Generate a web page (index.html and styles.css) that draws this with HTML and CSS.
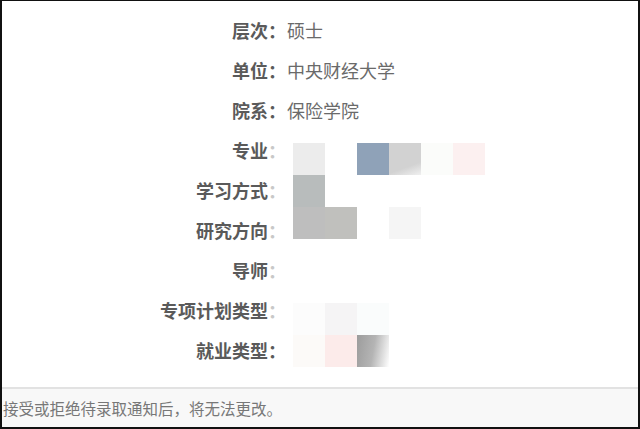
FILE: index.html
```html
<!DOCTYPE html>
<html lang="zh">
<head>
<meta charset="utf-8">
<link rel="stylesheet" href="styles.css">
</head>
<body>
<div class="frame">
  <div class="info">
    <div class="row"><span class="label">层次：</span><span class="value">硕士</span></div>
    <div class="row"><span class="label">单位：</span><span class="value">中央财经大学</span></div>
    <div class="row"><span class="label">院系：</span><span class="value">保险学院</span></div>
    <div class="row"><span class="label">专业<i class="faint">：</i></span><span class="value"></span></div>
    <div class="row"><span class="label">学习方式<i class="faint">：</i></span><span class="value"></span></div>
    <div class="row"><span class="label">研究方向<i class="faint">：</i></span><span class="value"></span></div>
    <div class="row"><span class="label">导师<i class="faint">：</i></span><span class="value"></span></div>
    <div class="row"><span class="label">专项计划类型<i class="faint">：</i></span><span class="value"></span></div>
    <div class="row"><span class="label">就业类型：</span><span class="value"></span></div>
  </div>
  <div class="mosaic">
    <b class="c1"></b><b></b><b class="c2"></b><b class="c3"></b><b class="c4"></b><b class="c5"></b>
    <b class="c6"></b><b></b><b></b><b></b><b></b><b></b>
    <b class="c7"></b><b class="c8"></b><b></b><b class="c9"></b><b></b><b></b>
    <b></b><b></b><b></b><b></b><b></b><b></b>
    <b></b><b></b><b></b><b></b><b></b><b></b>
    <b class="c10"></b><b class="c11"></b><b class="c12"></b><b></b><b></b><b></b>
    <b class="c13"></b><b class="c14"></b><b class="c15"></b><b></b><b></b><b></b>
  </div>
  <div class="footer">接受或拒绝待录取通知后，将无法更改。</div>
</div>
</body>
</html>
```
FILE: styles.css
```css
* { box-sizing: border-box; }
html, body { margin: 0; padding: 0; background: #fff; }
body { font-family: "Noto Sans CJK SC", "Noto Sans", sans-serif; }
.frame {
  position: relative;
  width: 640px;
  height: 429px;
  border-top: 1px solid #111;
  border-left: 2px solid #111;
  border-right: 2px solid #111;
  border-bottom: 2px solid #111;
  display: flex;
  flex-direction: column;
  background: #fff;
}
.info {
  flex: 1;
  padding-top: 9px;
}
.row {
  display: grid;
  grid-template-columns: 284px 1fr;
  column-gap: 1px;
  height: 40px;
  align-items: center;
  font-size: 18px;
  line-height: 24px;
}
.label {
  text-align: right;
  font-weight: bold;
  color: #5a5a5a;
}
.faint { font-style: normal; color: #c8c8c8; }
.value { color: #6a6a6a; }
.mosaic {
  position: absolute;
  left: 291px;
  top: 142px;
  display: grid;
  grid-template-columns: repeat(6, 32px);
  grid-auto-rows: 32px;
}
.mosaic b { display: block; background: transparent; }
.mosaic .c1 { background: #ececec; }
.mosaic .c2 { background: #8fa2b8; }
.mosaic .c3 { background: linear-gradient(160deg, #d2d2d2 70%, #f0f0f0 100%); }
.mosaic .c4 { background: #fbfcfa; }
.mosaic .c5 { background: #fcf0f0; }
.mosaic .c6 { background: #b8bcbc; }
.mosaic .c7 { background: #bebebe; }
.mosaic .c8 { background: #c0c0bd; }
.mosaic .c9 { background: #f5f5f5; }
.mosaic .c10 { background: #fcfcfc; }
.mosaic .c11 { background: #f5f4f5; }
.mosaic .c12 { background: #fafcfc; }
.mosaic .c13 { background: #fcfaf8; }
.mosaic .c14 { background: #fcebea; }
.mosaic .c15 { background: linear-gradient(100deg, #9c9c9c 0%, #b4b4b4 50%, #fff 100%); }
.footer {
  height: 40px;
  border-top: 2px solid #e2e2e2;
  background: #f8f8f8;
  color: #777;
  font-size: 15.5px;
  line-height: 38px;
  padding-left: 1px;
  padding-bottom: 2px;
  white-space: nowrap;
}
```
